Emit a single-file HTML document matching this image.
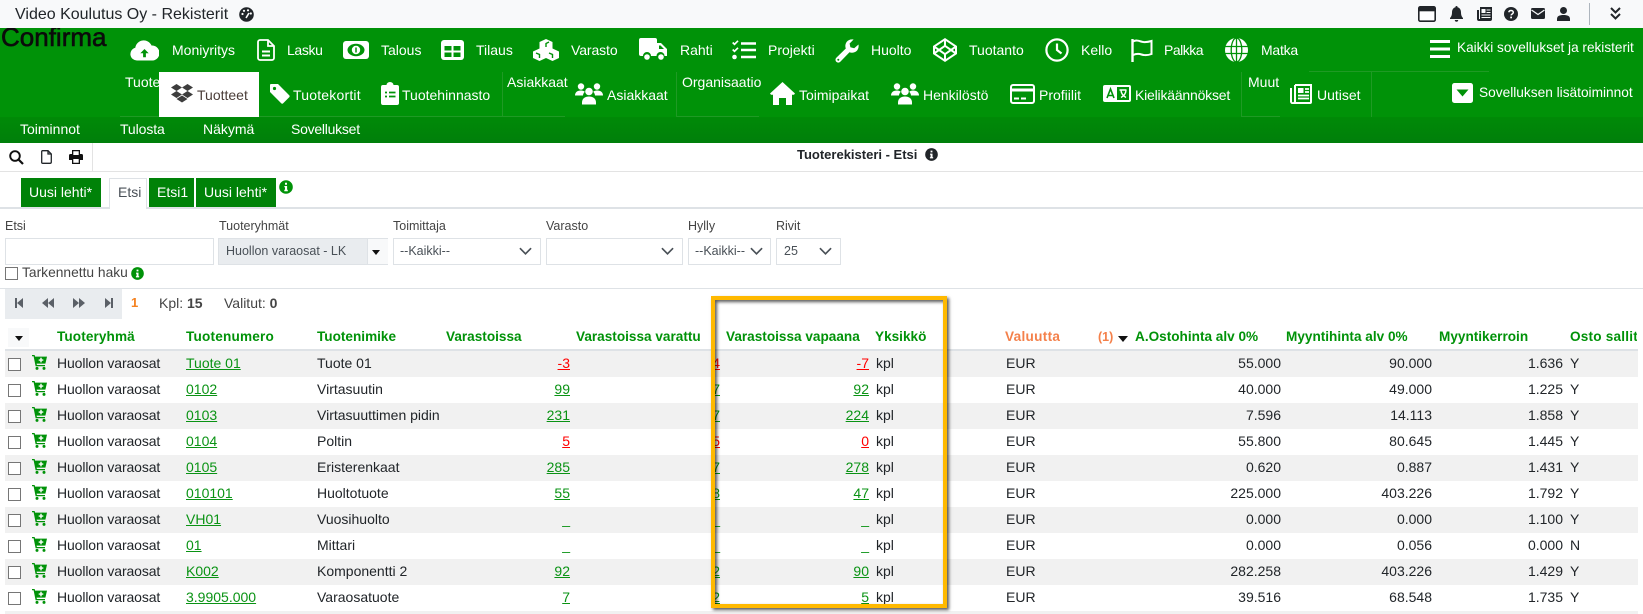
<!DOCTYPE html>
<html><head><meta charset="utf-8"><title>Tuoterekisteri</title>
<style>
html,body{margin:0;padding:0;width:1643px;height:614px;overflow:hidden;background:#fff}
body{position:relative;font-family:"Liberation Sans",sans-serif;font-size:14px;color:#212529}
.a,.t,svg.i{position:absolute}
.t{white-space:nowrap;line-height:20px;height:20px}
.w{color:#fff;font-size:14px}
.h{font-weight:bold;color:#009208;font-size:13.6px;top:327px}
.row{position:absolute;left:5px;width:1633px;height:26px;overflow:visible}
.row.g{background:#f1f1f1}
.row .t{top:2px}
.row i.b{position:absolute;left:3px;top:7px;width:11px;height:11px;border:1px solid #767676;background:#fff}
.row svg{position:absolute;left:27px;top:4px;width:15px;height:15px}
.c1{left:52px;letter-spacing:-.12px}.c2{left:181px}.c3{left:312px}.c4{left:871px}.c5{left:1001px}.c6{left:1565px}
.r1,.r2,.r3,.r4,.r5,.r6{text-align:right;width:80px}
.r1{left:485px}.r2{left:635px}.r3{left:784px}.r4{left:1196px}.r5{left:1347px}.r6{left:1478px}
a{color:#0a9314;text-decoration:underline}
a.red{color:#f00}
.box{position:absolute;background:#fff;border:1px solid #dee2e6;box-sizing:border-box;height:27px;top:238px}
.lb{font-size:12.5px;color:#444;top:216px}
.ln{position:absolute;background:#1f9a24}
</style></head><body>
<svg width="0" height="0" style="position:absolute"><defs>
<symbol id="cart" viewBox="0 0 15 15"><path fill="#009208" d="M0 0h2.600l.5 1.600H15l-1.600 7H4.600l.3 1.400H13v1.300H3.600L1.600 1.300H0z"/><path fill="#fff" d="M8.300 2.800h1.400v1.600h1.600v1.400H9.700v1.600H8.300V5.800H6.700V4.400h1.600z"/><circle fill="#009208" cx="5" cy="13.400" r="1.500"/><circle fill="#009208" cx="12" cy="13.400" r="1.500"/></symbol>
<symbol id="ppl" viewBox="0 0 28 22"><g fill="#fff"><circle cx="6" cy="4" r="3.200"/><circle cx="22" cy="4" r="3.200"/><path d="M0 13c0-3 2-5 6-5 1.500 0 3 .5 3.800 1.200C8.500 10.500 8 12 8 13z"/><path d="M28 13c0-3-2-5-6-5-1.500 0-3 .5-3.800 1.200C19.500 10.500 20 12 20 13z"/><circle cx="14" cy="9" r="3.800"/><path d="M7 22v-2c0-4 3-6 7-6s7 2 7 6v2z"/></g></symbol>
<symbol id="info" viewBox="0 0 14 14"><circle cx="7" cy="7" r="6.800" fill="currentColor"/><path fill="#fff" d="M6 2.800h2v1.900H6zM5.400 6h2.700v3.800h.7v1.400H5.300V9.800H6V7.300h-.6z"/></symbol>
<symbol id="chev" viewBox="0 0 14 8"><path d="M1 1l6 6 6-6" fill="none" stroke="#495057" stroke-width="1.800"/></symbol>
</defs></svg>

<!-- top bar -->
<div class="a" style="left:0;top:0;width:1643px;height:28px;background:#f8f9fa"></div>
<div class="t" style="left:15px;top:5px;font-size:16px;color:#212529">Video Koulutus Oy - Rekisterit</div>
<svg class="i" style="left:239px;top:7px" width="15" height="15" viewBox="0 0 15 15"><circle cx="7.500" cy="7.500" r="7.300" fill="#212529"/><circle cx="3.500" cy="7" r="1.100" fill="#fff"/><circle cx="5" cy="3.800" r="1.100" fill="#fff"/><circle cx="9" cy="3.300" r="1.100" fill="#fff"/><circle cx="11.800" cy="6.500" r="1.100" fill="#fff"/><path d="M7 11l3-5" stroke="#fff" stroke-width="1.600"/></svg>
<svg class="i" style="left:1418px;top:6px" width="18" height="16" viewBox="0 0 18 16"><rect x="0.800" y="0.800" width="16.400" height="14.400" rx="1.500" fill="#fff" stroke="#212529" stroke-width="1.600"/><rect x="0.800" y="0.800" width="16.400" height="4.500" fill="#212529"/></svg>
<svg class="i" style="left:1450px;top:6px" width="13" height="16" viewBox="0 0 13 16"><path fill="#212529" d="M6.500 0a1 1 0 0 1 1 1.200C10 1.800 11 4 11 6.500c0 3 1 4.500 2 5.500v1H0v-1c1-1 2-2.500 2-5.500C2 4 3 1.800 5.500 1.200A1 1 0 0 1 6.500 0zM4.800 14h3.400a1.700 1.700 0 0 1-3.400 0z"/></svg>
<svg class="i" style="left:1477px;top:7px" width="15" height="14" viewBox="0 0 15 14"><path fill="#212529" d="M3 0h12v12a2 2 0 0 1-2 2H2a2 2 0 0 1-2-2V3h2v9h1z"/><rect x="4.500" y="2" width="4" height="4" fill="#f8f9fa"/><path stroke="#f8f9fa" d="M9.500 3H13.500M9.500 5.500H13.500M4.500 8H13.500M4.500 10.500H13.500"/></svg>
<svg class="i" style="left:1504px;top:7px" width="14" height="14" viewBox="0 0 14 14"><circle cx="7" cy="7" r="7" fill="#212529"/><path d="M4.800 5.300C5 4 6 3.500 7 3.500c1.400 0 2.300.8 2.300 1.900 0 1.600-2.200 1.500-2.200 3" fill="none" stroke="#fff" stroke-width="1.500"/><rect x="6.200" y="9.600" width="1.800" height="1.700" fill="#fff"/></svg>
<svg class="i" style="left:1531px;top:8px" width="14" height="11" viewBox="0 0 14 11"><rect width="14" height="11" rx="1.500" fill="#212529"/><path d="M0.500 2l6.500 4.500L13.500 2" fill="none" stroke="#f8f9fa" stroke-width="1.200"/></svg>
<svg class="i" style="left:1557px;top:7px" width="13" height="14" viewBox="0 0 13 14"><circle cx="6.500" cy="3.500" r="3.500" fill="#212529"/><path fill="#212529" d="M0 14v-2c0-3 2.500-4 6.500-4s6.500 1 6.500 4v2z"/></svg>
<div class="a" style="left:1589px;top:3px;width:1px;height:22px;background:#adb5bd"></div>
<svg class="i" style="left:1610px;top:7px" width="11" height="14" viewBox="0 0 11 14"><path d="M1 1l4.500 4.500L10 1M1 7l4.500 4.500L10 7" fill="none" stroke="#212529" stroke-width="2"/></svg>

<!-- green nav -->
<div class="a" style="left:0;top:28px;width:1643px;height:89px;background:#009208;overflow:hidden">
<div class="t" style="left:1px;top:-3px;height:24px;line-height:24px;font-size:26px;font-weight:normal;-webkit-text-stroke:.6px #0b0b0b;color:#0b0b0b;letter-spacing:0">Confirma</div>
</div>
<div class="a" style="left:0;top:117px;width:1643px;height:26px;background:linear-gradient(#008a07,#007f0a)"></div>

<!-- Row 1 icons -->
<svg class="i" style="left:130px;top:40px" width="29" height="21" viewBox="0 0 29 21"><path fill="#fff" d="M7 20.500A6.500 6.500 0 0 1 5.300 7.700 8.500 8.500 0 0 1 21.500 5.500 7.500 7.500 0 0 1 22.500 20.500z"/><path fill="#009208" d="M14.500 9l-4.200 4.200h2.800v4h2.800v-4h2.800z"/></svg>
<svg class="i" style="left:257px;top:39px" width="18" height="22" viewBox="0 0 18 22"><path d="M3 1h8l6 6v12a2 2 0 0 1-2 2H3a2 2 0 0 1-2-2V3a2 2 0 0 1 2-2zM11 1v6h6" fill="none" stroke="#fff" stroke-width="1.800"/><path d="M5 12.500h8M5 16.500h8" stroke="#fff" stroke-width="2"/></svg>
<svg class="i" style="left:343px;top:41px" width="26" height="18" viewBox="0 0 26 18"><rect width="26" height="18" rx="3" fill="#fff"/><ellipse cx="13" cy="9" rx="8.500" ry="6.200" fill="#009208"/><circle cx="13" cy="9" r="4.200" fill="#fff"/><path d="M13 6.500v5" stroke="#009208" stroke-width="1.500"/></svg>
<svg class="i" style="left:441px;top:40px" width="23" height="20" viewBox="0 0 23 20"><rect width="23" height="20" rx="3" fill="#fff"/><rect x="3.500" y="6" width="7" height="4.500" fill="#009208"/><rect x="12.500" y="6" width="7" height="4.500" fill="#009208"/><rect x="3.500" y="12.500" width="7" height="4.500" fill="#009208"/><rect x="12.500" y="12.500" width="7" height="4.500" fill="#009208"/></svg>
<svg class="i" style="left:533px;top:39px" width="26" height="22" viewBox="0 0 26 22"><g fill="#fff"><path d="M13 0l6.500 3v7L13 13l-6.500-3V3z"/><path d="M6.500 9.500L13 12.500v6.500L6.500 22 0 19v-6.500z"/><path d="M19.500 9.500L26 12.500V19l-6.500 3L13 19v-6.500z"/></g><path d="M16 3l-3 1.500V8M3 14l3.500 1.500V19M16 14l3.500 1.500V19" fill="none" stroke="#009208" stroke-width="1.400"/></svg>
<svg class="i" style="left:639px;top:38px" width="28" height="23" viewBox="0 0 28 23"><path fill="#fff" d="M2 0h14a2 2 0 0 1 2 2v3h4l6 6v7h-2.500a4 4 0 0 0-8 0h-5.500a4 4 0 0 0-8 0H2a2 2 0 0 1-2-2V2a2 2 0 0 1 2-2z"/><path fill="#009208" d="M20 7.500h1.500l3.500 3.500h-5z"/><circle cx="8" cy="19" r="2.800" fill="#fff"/><circle cx="22" cy="19" r="2.800" fill="#fff"/></svg>
<svg class="i" style="left:732px;top:40px" width="24" height="20" viewBox="0 0 24 20"><path d="M.7 2.500l1.800 1.800L6 .8M.7 9.500l1.800 1.800L6 7.800" fill="none" stroke="#fff" stroke-width="1.700"/><circle cx="2.500" cy="17" r="2.300" fill="#fff"/><path d="M9 3.500h15M9 10h15M9 17h15" stroke="#fff" stroke-width="2.600"/></svg>
<svg class="i" style="left:835px;top:39px" width="24" height="24" viewBox="0 0 24 24"><path fill="#fff" d="M23.500 5.500c.5 3-.5 5.500-2.500 7-2 1.400-4.500 1.500-6.500.8L5.300 22.800a2.800 2.800 0 0 1-4-4l9.500-9.300C10 7.500 10.200 5 11.600 3c1.500-2 4-3 7-2.500l-4 4 .8 3.800 3.800.9z"/><circle cx="3.300" cy="20.800" r="1" fill="#009208"/></svg>
<svg class="i" style="left:933px;top:38px" width="24" height="24" viewBox="0 0 24 24"><path d="M12 1.200L23 8.500v7L12 22.800 1 15.500v-7zM12 1.200v6.600M12 16.200v6.600M1 8.500L12 16.200 23 8.500M1 15.500L12 7.800 23 15.500" fill="none" stroke="#fff" stroke-width="2"/></svg>
<svg class="i" style="left:1045px;top:38px" width="24" height="24" viewBox="0 0 24 24"><circle cx="12" cy="12" r="10.600" fill="none" stroke="#fff" stroke-width="2.200"/><path d="M12 5.500V12l4.500 3.500" fill="none" stroke="#fff" stroke-width="2.200"/></svg>
<svg class="i" style="left:1131px;top:39px" width="22" height="23" viewBox="0 0 22 23"><path d="M1.500 0v23" stroke="#fff" stroke-width="2.400"/><path d="M2 2.500c3-1.500 5-1 8 0s6 .8 10.500-.5v13c-4 1.500-7 1.500-10 .5s-5-1-8.500.5" fill="none" stroke="#fff" stroke-width="2"/></svg>
<svg class="i" style="left:1225px;top:38px" width="23" height="24" viewBox="0 0 23 24"><ellipse cx="11.500" cy="12" rx="11.500" ry="12" fill="#fff"/><path d="M11.500 0v24M0 8.500h23M0 15.500h23" stroke="#009208" stroke-width="1.300"/><ellipse cx="11.500" cy="12" rx="5.300" ry="12" fill="none" stroke="#009208" stroke-width="1.300"/></svg>
<svg class="i" style="left:1430px;top:40px" width="20" height="18" viewBox="0 0 20 18"><path d="M0 1.500h20M0 9h20M0 16.500h20" stroke="#fff" stroke-width="3"/></svg>

<div class="t w" style="left:172px;top:40px">Moniyritys</div>
<div class="t w" style="left:287px;top:40px;letter-spacing:-.35px">Lasku</div>
<div class="t w" style="left:381px;top:40px">Talous</div>
<div class="t w" style="left:476px;top:40px">Tilaus</div>
<div class="t w" style="left:571px;top:40px;letter-spacing:-.1px">Varasto</div>
<div class="t w" style="left:680px;top:40px">Rahti</div>
<div class="t w" style="left:768px;top:40px">Projekti</div>
<div class="t w" style="left:871px;top:40px">Huolto</div>
<div class="t w" style="left:969px;top:40px">Tuotanto</div>
<div class="t w" style="left:1081px;top:40px">Kello</div>
<div class="t w" style="left:1164px;top:40px;letter-spacing:-.5px">Palkka</div>
<div class="t w" style="left:1261px;top:40px;letter-spacing:-.25px">Matka</div>
<div class="t w" style="left:1457px;top:38px;font-size:13.6px">Kaikki sovellukset ja rekisterit</div>

<!-- Row 2 section lines -->
<div class="ln" style="left:120px;top:116px;width:445px;height:1px"></div>
<div class="ln" style="left:502px;top:72px;width:1px;height:44px"></div>
<div class="ln" style="left:676px;top:72px;width:1px;height:44px"></div>
<div class="ln" style="left:676px;top:116px;width:83px;height:1px"></div>
<div class="ln" style="left:1241px;top:72px;width:1px;height:44px"></div>
<div class="ln" style="left:1241px;top:116px;width:39px;height:1px"></div>
<div class="ln" style="left:1371px;top:72px;width:1px;height:45px"></div>
<div class="ln" style="left:1309px;top:71px;width:180px;height:1px"></div>

<div class="t w" style="left:125px;top:72px;width:34px;overflow:hidden">Tuote</div>
<div class="a" style="left:159px;top:72px;width:100px;height:45px;background:#fff"></div>
<svg class="i" style="left:171px;top:84px" width="22" height="21" viewBox="0 0 22 21"><path fill="#3d3d3d" d="M5.500 0L11 3.500 5.500 7 0 3.500zM16.500 0L22 3.500 16.500 7 11 3.500zM0 10.500L5.500 7 11 10.500 5.500 14zM22 10.500L16.500 7 11 10.500 16.500 14zM5.500 15L11 11.500 16.500 15 11 18.500z"/></svg>
<div class="t" style="left:197px;top:85px;font-size:14px;color:#4a3d38">Tuotteet</div>
<svg class="i" style="left:270px;top:84px" width="20" height="20" viewBox="0 0 20 20"><path fill="#fff" d="M1 0h7l11.200 11.200a1.500 1.500 0 0 1 0 2L13.200 19.300a1.500 1.500 0 0 1-2 0L0 8V1a1 1 0 0 1 1-1z"/><circle cx="4.500" cy="4.500" r="1.600" fill="#009208"/></svg>
<div class="t w" style="left:293px;top:85px;letter-spacing:.2px">Tuotekortit</div>
<svg class="i" style="left:381px;top:82px" width="18" height="23" viewBox="0 0 18 23"><path fill="#fff" d="M2 3h3.500a3.500 3 0 0 1 7 0H16a2 2 0 0 1 2 2v16a2 2 0 0 1-2 2H2a2 2 0 0 1-2-2V5a2 2 0 0 1 2-2z"/><path d="M4 10.500h2M8 10.500h6.500M4 14.500h2M8 14.500h6.500" stroke="#009208" stroke-width="1.700"/></svg>
<div class="t w" style="left:402px;top:85px">Tuotehinnasto</div>
<div class="t w" style="left:507px;top:72px">Asiakkaat</div>
<svg class="i" style="left:575px;top:82px" width="28" height="23"><use href="#ppl"/></svg>
<div class="t w" style="left:607px;top:85px">Asiakkaat</div>
<div class="t w" style="left:682px;top:72px">Organisaatio</div>
<svg class="i" style="left:770px;top:82px" width="25" height="23" viewBox="0 0 25 23"><path fill="#fff" d="M12.500 0L25 11.500l-1 1.300h-2V23h-6v-7H9v7H3V12.800H1l-1-1.300z"/></svg>
<div class="t w" style="left:799px;top:85px">Toimipaikat</div>
<svg class="i" style="left:891px;top:82px" width="28" height="23"><use href="#ppl"/></svg>
<div class="t w" style="left:923px;top:85px">Henkilöstö</div>
<svg class="i" style="left:1010px;top:84px" width="25" height="20" viewBox="0 0 25 20"><rect x="1" y="1" width="23" height="18" rx="2" fill="none" stroke="#fff" stroke-width="2"/><rect x="1" y="4.500" width="23" height="3" fill="#fff"/><path d="M4 14.500h5M11 14.500h5" stroke="#fff" stroke-width="2"/></svg>
<div class="t w" style="left:1039px;top:85px">Profiilit</div>
<svg class="i" style="left:1103px;top:85px" width="28" height="17" viewBox="0 0 28 17"><rect width="28" height="17" rx="2" fill="#fff"/><rect x="14" y="2" width="12" height="13" fill="#009208"/><path d="M4 13L7.500 4 11 13M5.300 10.500h4.400" fill="none" stroke="#009208" stroke-width="1.600"/><path d="M16.500 5h7M18 5c0 3 2 6 5 7.500M23 5c0 3-2 6-5 7.500" fill="none" stroke="#fff" stroke-width="1.400"/></svg>
<div class="t w" style="left:1135px;top:85px;letter-spacing:-.2px">Kielikäännökset</div>
<div class="t w" style="left:1248px;top:72px">Muut</div>
<svg class="i" style="left:1290px;top:84px" width="22" height="20" viewBox="0 0 22 20"><path d="M5 1h16v17a1 1 0 0 1-1 1H4M1 4v13a2 2 0 0 0 3 2 2 2 0 0 0 1-2V1" fill="none" stroke="#fff" stroke-width="2"/><rect x="8" y="4" width="5.500" height="5" fill="#fff"/><path d="M15 5h4M15 8h4M8 11.500h11M8 14.500h11" stroke="#fff" stroke-width="1.800"/></svg>
<div class="t w" style="left:1317px;top:85px">Uutiset</div>
<svg class="i" style="left:1452px;top:83px" width="21" height="20" viewBox="0 0 21 20"><rect width="21" height="20" rx="2.500" fill="#fff"/><path d="M4.500 6.500h12L10.500 13.500z" fill="#009208"/></svg>
<div class="t w" style="left:1479px;top:83px;font-size:13.7px">Sovelluksen lisätoiminnot</div>

<div class="t w" style="left:20px;top:119px">Toiminnot</div>
<div class="t w" style="left:120px;top:119px;letter-spacing:-.1px">Tulosta</div>
<div class="t w" style="left:203px;top:119px">Näkymä</div>
<div class="t w" style="left:291px;top:119px;letter-spacing:-.25px">Sovellukset</div>

<!-- toolbar -->
<div class="a" style="left:0;top:171px;width:1643px;height:1px;background:#e3e3e3"></div>
<div class="a" style="left:92px;top:143px;width:1px;height:28px;background:#e3e3e3"></div>
<svg class="i" style="left:9px;top:150px" width="15" height="15" viewBox="0 0 15 15"><circle cx="6" cy="6" r="4.800" fill="none" stroke="#111" stroke-width="1.900"/><path d="M9.500 9.500L14 14" stroke="#111" stroke-width="2.200"/></svg>
<svg class="i" style="left:41px;top:150px" width="11" height="14" viewBox="0 0 11 14"><path d="M1.500.7h5.500l3.300 3.300v8a1.300 1.300 0 0 1-1.300 1.300H1.500A1 1 0 0 1 .7 12.300V1.500a.8.800 0 0 1 .8-.8zM7 .7V4h3.300" fill="none" stroke="#212529" stroke-width="1.300"/></svg>
<svg class="i" style="left:69px;top:150px" width="14" height="14" viewBox="0 0 14 14"><path fill="#111" d="M3 0h8v4h1.500A1.500 1.500 0 0 1 14 5.500V10h-3v4H3v-4H0V5.500A1.500 1.500 0 0 1 1.500 4H3zm1.300 1.300V5h5.400V1.300zm0 7.700v3.700h5.400V9z"/></svg>
<div class="t" style="left:797px;top:145px;font-weight:bold;font-size:13px;color:#212529">Tuoterekisteri - Etsi</div>
<svg class="i" style="left:925px;top:148px;color:#212529" width="13" height="13"><use href="#info"/></svg>

<!-- tabs -->
<div class="a" style="left:0;top:207px;width:1643px;height:2px;background:#dee2e6"></div>
<div class="a" style="left:21px;top:178px;width:80px;height:29px;background:#008208"></div>
<div class="a" style="left:109px;top:178px;width:38px;height:31px;background:#fff;box-sizing:border-box;border:1px solid #dee2e6;border-bottom:0"></div>
<div class="a" style="left:149px;top:178px;width:45px;height:29px;background:#008208"></div>
<div class="a" style="left:196px;top:178px;width:80px;height:29px;background:#008208"></div>
<div class="t" style="left:29px;top:182px;color:#fff">Uusi lehti*</div>
<div class="t" style="left:118px;top:182px;color:#495057">Etsi</div>
<div class="t" style="left:157px;top:182px;color:#fff">Etsi1</div>
<div class="t" style="left:204px;top:182px;color:#fff">Uusi lehti*</div>
<svg class="i" style="left:279px;top:180px;color:#009208" width="14" height="14"><use href="#info"/></svg>

<!-- filters -->
<div class="t lb" style="left:5px">Etsi</div>
<div class="t lb" style="left:219px">Tuoteryhmät</div>
<div class="t lb" style="left:393px">Toimittaja</div>
<div class="t lb" style="left:546px">Varasto</div>
<div class="t lb" style="left:688px">Hylly</div>
<div class="t lb" style="left:776px">Rivit</div>
<div class="box" style="left:5px;width:209px"></div>
<div class="box" style="left:218px;width:170px;background:#e9ecef"></div>
<div class="a" style="left:367px;top:239px;width:20px;height:25px;background:#f8f9fa;border-left:1px solid #dee2e6"></div>
<div class="a" style="left:372px;top:250px;border:4px solid transparent;border-top:5px solid #111"></div>
<div class="t" style="left:226px;top:241px;font-size:12.5px;color:#495057">Huollon varaosat - LK</div>
<div class="box" style="left:393px;width:148px"></div>
<div class="t" style="left:400px;top:241px;font-size:12.5px;color:#495057">--Kaikki--</div>
<svg class="i" style="left:519px;top:247px" width="13" height="8"><use href="#chev"/></svg>
<div class="box" style="left:546px;width:137px"></div>
<svg class="i" style="left:661px;top:247px" width="13" height="8"><use href="#chev"/></svg>
<div class="box" style="left:688px;width:83px"></div>
<div class="t" style="left:695px;top:241px;font-size:12.5px;color:#495057">--Kaikki--</div>
<svg class="i" style="left:750px;top:247px" width="13" height="8"><use href="#chev"/></svg>
<div class="box" style="left:776px;width:65px"></div>
<div class="t" style="left:784px;top:241px;font-size:12.5px;color:#495057">25</div>
<svg class="i" style="left:819px;top:247px" width="13" height="8"><use href="#chev"/></svg>
<div class="a" style="left:5px;top:267px;width:11px;height:11px;border:1px solid #767676;background:#fff"></div>
<div class="t" style="left:22px;top:263px;color:#444;font-size:13.8px">Tarkennettu haku</div>
<svg class="i" style="left:131px;top:267px;color:#009208" width="13" height="13"><use href="#info"/></svg>
<div class="a" style="left:0;top:288px;width:1643px;height:1px;background:#dee2e6"></div>

<!-- pager -->
<div class="a" style="left:5px;top:289px;width:117px;height:30px;background:#e9ecef"></div>
<svg class="i" style="left:14px;top:298px" width="105" height="10" viewBox="0 0 105 10"><g fill="#5b6067"><path d="M1 0h2v10H1zM9 0v10L3 5z"/><path d="M28 5l6-5v10zM34 5l6-5v10z"/><path d="M59 0l6 5-6 5zM65 0l6 5-6 5z"/><path d="M91 0l6 5-6 5zM97 0h2v10h-2z"/></g></svg>
<div class="t" style="left:131px;top:293px;color:#f58220;font-weight:bold;font-size:13px">1</div>
<div class="t" style="left:159px;top:293px;color:#444">Kpl: <b>15</b></div>
<div class="t" style="left:224px;top:293px;color:#444">Valitut: <b>0</b></div>

<!-- table header -->
<div class="a" style="left:8px;top:328px;width:21px;height:19px;background:#f8f9fa"></div>
<div class="a" style="left:15px;top:336px;border:4px solid transparent;border-top:5px solid #111"></div>
<div class="t h" style="left:57px;letter-spacing:.1px">Tuoteryhmä</div>
<div class="t h" style="left:186px;letter-spacing:.2px">Tuotenumero</div>
<div class="t h" style="left:317px">Tuotenimike</div>
<div class="t h" style="left:446px">Varastoissa</div>
<div class="t h" style="left:576px">Varastoissa varattu</div>
<div class="t h" style="left:726px">Varastoissa vapaana</div>
<div class="t h" style="left:875px">Yksikkö</div>
<div class="t h" style="left:1005px;color:#f4804a;letter-spacing:.3px">Valuutta</div>
<div class="t" style="left:1098px;top:327px;color:#f4804a;font-size:12.5px;font-weight:bold">(1)</div>
<div class="a" style="left:1118px;top:336px;border:5px solid transparent;border-top:6px solid #111"></div>
<div class="t h" style="left:1135px">A.Ostohinta alv 0%</div>
<div class="t h" style="left:1286px">Myyntihinta alv 0%</div>
<div class="t h" style="left:1439px">Myyntikerroin</div>
<div class="a" style="left:1570px;top:327px;width:67px;height:20px;overflow:hidden"><div class="t h" style="left:0;top:0;letter-spacing:.2px">Osto sallitt</div></div>
<div class="a" style="left:5px;top:349px;width:1633px;height:2px;background:#dee2e6"></div>

<!-- rows -->
<div class="row g" style="top:351px"><i class="b"></i><svg><use href="#cart"/></svg><span class="t c1">Huollon varaosat</span><span class="t c2"><a>Tuote 01</a></span><span class="t c3">Tuote 01</span><span class="t r1"><a class="red">-3</a></span><span class="t r2"><a class="red">4</a></span><span class="t r3"><a class="red">-7</a></span><span class="t c4">kpl</span><span class="t c5">EUR</span><span class="t r4">55.000</span><span class="t r5">90.000</span><span class="t r6">1.636</span><span class="t c6">Y</span></div>
<div class="row" style="top:377px"><i class="b"></i><svg><use href="#cart"/></svg><span class="t c1">Huollon varaosat</span><span class="t c2"><a>0102</a></span><span class="t c3">Virtasuutin</span><span class="t r1"><a>99</a></span><span class="t r2"><a>7</a></span><span class="t r3"><a>92</a></span><span class="t c4">kpl</span><span class="t c5">EUR</span><span class="t r4">40.000</span><span class="t r5">49.000</span><span class="t r6">1.225</span><span class="t c6">Y</span></div>
<div class="row g" style="top:403px"><i class="b"></i><svg><use href="#cart"/></svg><span class="t c1">Huollon varaosat</span><span class="t c2"><a>0103</a></span><span class="t c3">Virtasuuttimen pidin</span><span class="t r1"><a>231</a></span><span class="t r2"><a>7</a></span><span class="t r3"><a>224</a></span><span class="t c4">kpl</span><span class="t c5">EUR</span><span class="t r4">7.596</span><span class="t r5">14.113</span><span class="t r6">1.858</span><span class="t c6">Y</span></div>
<div class="row" style="top:429px"><i class="b"></i><svg><use href="#cart"/></svg><span class="t c1">Huollon varaosat</span><span class="t c2"><a>0104</a></span><span class="t c3">Poltin</span><span class="t r1"><a class="red">5</a></span><span class="t r2"><a class="red">5</a></span><span class="t r3"><a class="red">0</a></span><span class="t c4">kpl</span><span class="t c5">EUR</span><span class="t r4">55.800</span><span class="t r5">80.645</span><span class="t r6">1.445</span><span class="t c6">Y</span></div>
<div class="row g" style="top:455px"><i class="b"></i><svg><use href="#cart"/></svg><span class="t c1">Huollon varaosat</span><span class="t c2"><a>0105</a></span><span class="t c3">Eristerenkaat</span><span class="t r1"><a>285</a></span><span class="t r2"><a>7</a></span><span class="t r3"><a>278</a></span><span class="t c4">kpl</span><span class="t c5">EUR</span><span class="t r4">0.620</span><span class="t r5">0.887</span><span class="t r6">1.431</span><span class="t c6">Y</span></div>
<div class="row" style="top:481px"><i class="b"></i><svg><use href="#cart"/></svg><span class="t c1">Huollon varaosat</span><span class="t c2"><a>010101</a></span><span class="t c3">Huoltotuote</span><span class="t r1"><a>55</a></span><span class="t r2"><a>8</a></span><span class="t r3"><a>47</a></span><span class="t c4">kpl</span><span class="t c5">EUR</span><span class="t r4">225.000</span><span class="t r5">403.226</span><span class="t r6">1.792</span><span class="t c6">Y</span></div>
<div class="row g" style="top:507px"><i class="b"></i><svg><use href="#cart"/></svg><span class="t c1">Huollon varaosat</span><span class="t c2"><a>VH01</a></span><span class="t c3">Vuosihuolto</span><span class="t r1"><a style="text-decoration:none">_</a></span><span class="t r2"><a style="text-decoration:none">_</a></span><span class="t r3"><a style="text-decoration:none">_</a></span><span class="t c4">kpl</span><span class="t c5">EUR</span><span class="t r4">0.000</span><span class="t r5">0.000</span><span class="t r6">1.100</span><span class="t c6">Y</span></div>
<div class="row" style="top:533px"><i class="b"></i><svg><use href="#cart"/></svg><span class="t c1">Huollon varaosat</span><span class="t c2"><a>01</a></span><span class="t c3">Mittari</span><span class="t r1"><a style="text-decoration:none">_</a></span><span class="t r2"><a style="text-decoration:none">_</a></span><span class="t r3"><a style="text-decoration:none">_</a></span><span class="t c4">kpl</span><span class="t c5">EUR</span><span class="t r4">0.000</span><span class="t r5">0.056</span><span class="t r6">0.000</span><span class="t c6">N</span></div>
<div class="row g" style="top:559px"><i class="b"></i><svg><use href="#cart"/></svg><span class="t c1">Huollon varaosat</span><span class="t c2"><a>K002</a></span><span class="t c3">Komponentti 2</span><span class="t r1"><a>92</a></span><span class="t r2"><a>2</a></span><span class="t r3"><a>90</a></span><span class="t c4">kpl</span><span class="t c5">EUR</span><span class="t r4">282.258</span><span class="t r5">403.226</span><span class="t r6">1.429</span><span class="t c6">Y</span></div>
<div class="row" style="top:585px"><i class="b"></i><svg><use href="#cart"/></svg><span class="t c1">Huollon varaosat</span><span class="t c2"><a>3.9905.000</a></span><span class="t c3">Varaosatuote</span><span class="t r1"><a>7</a></span><span class="t r2"><a>2</a></span><span class="t r3"><a>5</a></span><span class="t c4">kpl</span><span class="t c5">EUR</span><span class="t r4">39.516</span><span class="t r5">68.548</span><span class="t r6">1.735</span><span class="t c6">Y</span></div>
<div class="row g" style="top:611px;height:3px"></div>

<!-- highlight -->
<div class="a" style="left:711px;top:296px;width:236px;height:312px;box-sizing:border-box;border:4.500px solid #ffb900;box-shadow:2px 2px 3px rgba(0,0,0,.65),inset 2px 2px 3px rgba(0,0,0,.65)"></div>
</body></html>
